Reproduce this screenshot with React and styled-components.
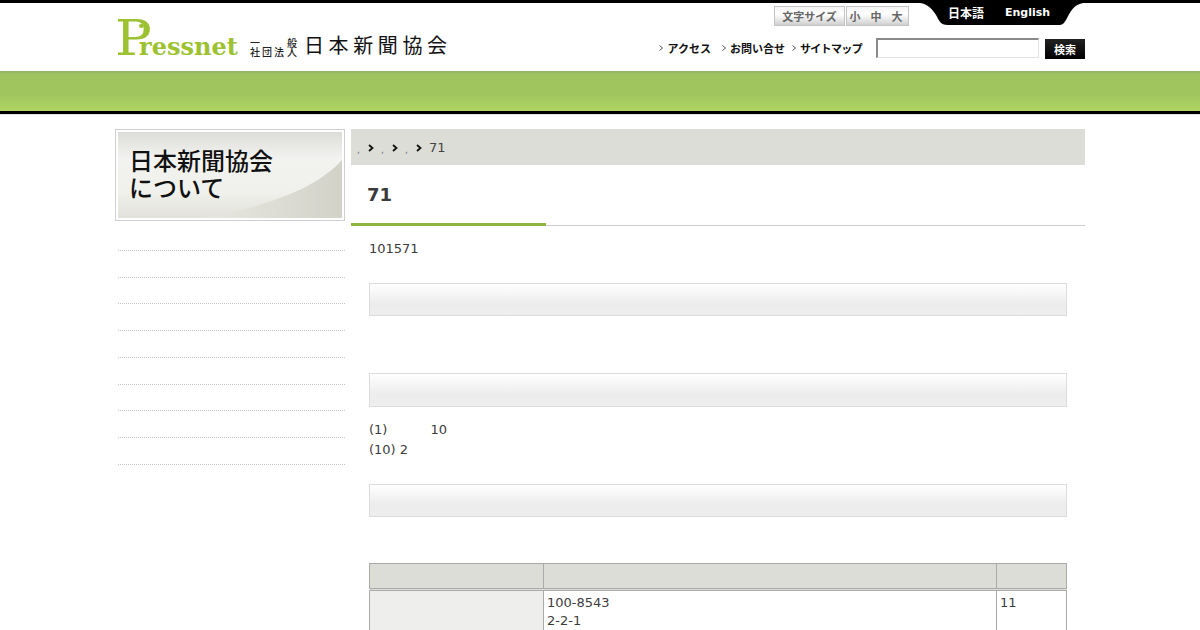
import React from "react";
import styled, { createGlobalStyle } from "styled-components";

const GlobalStyle = createGlobalStyle`
  html, body {
    margin: 0;
    padding: 0;
    background: #fff;
    color: #3c3c3c;
    font-family: "DejaVu Sans", sans-serif;
    font-size: 13px;
    line-height: 20px;
  }
`;

const CJK = `"Noto Sans CJK JP", "DejaVu Sans", sans-serif`;

const Header = styled.header`
  border-top: 3px solid #000;
  height: 68px;
  background: #fff;
`;

const Inner = styled.div`
  width: 970px;
  margin: 0 auto;
  position: relative;
`;

const HeaderInner = styled(Inner)`
  height: 68px;
  display: flex;
  justify-content: space-between;
`;

const LogoArea = styled.div`
  display: flex;
  align-items: flex-end;
  padding: 0 0 14px 0;
`;

const Logo = styled.div`
  position: relative;
  display: flex;
  align-items: flex-end;
  width: 135px;
  height: 38px;
  color: #9cc232;
`;

const LogoP = styled.span`
  position: relative;
  font-family: "DejaVu Serif", serif;
  font-size: 48px;
  line-height: 38px;
  width: 24px;
  transform: scaleX(1.14);
  transform-origin: left bottom;
  &::after {
    content: "";
    position: absolute;
    left: 21px;
    top: 5px;
    width: 4px;
    height: 4px;
    border-radius: 50%;
    background: #9cc232;
  }
`;

const LogoRest = styled.span`
  font-family: "DejaVu Serif", serif;
  font-weight: 700;
  font-size: 24px;
  line-height: 20px;
`;

const Corp = styled.div`
  display: grid;
  grid-template-columns: 37px 12px;
  width: 54px;
  font-family: ${CJK};
  font-size: 10px;
  font-weight: 500;
  line-height: 9px;
  color: #222;
  margin-bottom: 1px;
`;

const CorpCell = styled.span`
  letter-spacing: ${(p) => p.$spacing || 0}px;
  white-space: nowrap;
`;

const OrgName = styled.div`
  font-family: ${CJK};
  font-size: 20px;
  line-height: 20px;
  letter-spacing: 4.6px;
  color: #111;
  margin-bottom: 2px;
`;

const HeaderRight = styled.div`
  display: flex;
  flex-direction: column;
  align-items: flex-end;
`;

const TopRow = styled.div`
  display: flex;
  height: 35px;
`;

const SizeBox = styled.div`
  display: flex;
  gap: 1px;
  height: 20px;
  margin: 3px 11px 0 0;
  font-family: ${CJK};
  font-size: 11px;
  font-weight: 700;
  line-height: 19px;
  color: #666;
`;

const SizeCell = styled.div`
  display: flex;
  justify-content: center;
  gap: 10px;
  width: ${(p) => p.$width}px;
  padding-right: ${(p) => p.$inset || 0}px;
  background: linear-gradient(#f4f4f4, #fff 40%, #cfcfcf);
  border: 1px solid #c4c4c4;
  box-sizing: border-box;
`;

const LangTab = styled.div`
  display: flex;
  gap: 21px;
  width: 165px;
  height: 22px;
  box-sizing: border-box;
  padding-left: 28px;
  background: #000;
  color: #fff;
  font-family: ${CJK};
  font-size: 12px;
  font-weight: 700;
  line-height: 20px;
  clip-path: path("M0 0 H163 C153 2 151 8 146 17 C144 20 143 22 138 22 H28 C20 22 19 17 16 12 C12 6 8 1 0 0 Z");
`;

const LangEn = styled.span`
  font-family: "DejaVu Sans", sans-serif;
  font-size: 11px;
`;

const NavRow = styled.div`
  display: flex;
  align-items: flex-start;
`;

const NavList = styled.nav`
  display: flex;
  margin-right: 14px;
`;

const NavLink = styled.a`
  display: flex;
  align-items: center;
  gap: 4px;
  margin-left: ${(p) => p.$gap}px;
  font-family: ${CJK};
  font-size: 11px;
  font-weight: 700;
  line-height: 20px;
  letter-spacing: ${(p) => p.$spacing || 0}px;
  color: #111;
`;

const NavArrow = styled.svg`
  width: 4px;
  height: 6px;
`;

const SearchInput = styled.input`
  width: 163px;
  height: 20px;
  box-sizing: border-box;
  padding: 0;
  border: 1px solid #e4e4e4;
  border-top: 2px solid #8a8a8a;
  border-left: 2px solid #8a8a8a;
  background: #fff;
`;

const SearchButton = styled.button`
  width: 40px;
  height: 20px;
  margin: 1px 0 0 6px;
  padding: 0;
  border: 0;
  background: linear-gradient(#222, #000);
  color: #fff;
  font-family: ${CJK};
  font-size: 11px;
  font-weight: 700;
  line-height: 20px;
`;

const Band = styled.div`
  height: 40px;
  background: linear-gradient(#8fae6c 0, #9fc45f 3px, #a1c65f 60%, #b0d460 100%);
  border-bottom: 3px solid #000;
  box-shadow: 0 1px 0 #e2e8e4;
`;

const Columns = styled(Inner)`
  display: flex;
  justify-content: space-between;
  padding-top: 15px;
`;

const Side = styled.aside`
  width: 230px;
`;

const SideTitle = styled.div`
  position: relative;
  height: 92px;
  box-sizing: border-box;
  border: 1px solid #cfcfcf;
  padding: 2px;
  background: #fff;
`;

const SideTitleInner = styled.div`
  position: relative;
  height: 100%;
  overflow: hidden;
  background: linear-gradient(#dcdcd8, #f2f2f0 30%, #f0f0ec 70%, #e2e2da);
`;

const Swoosh = styled.svg`
  position: absolute;
  left: 0;
  top: 0;
  width: 100%;
  height: 100%;
`;

const SideText = styled.h2`
  position: relative;
  margin: 0;
  padding: 14px 0 0 11px;
  font-family: ${CJK};
  font-size: 24px;
  font-weight: 500;
  line-height: 27px;
  color: #111;
`;

const SideMenu = styled.ul`
  list-style: none;
  margin: 0 0 0 3px;
  padding: 3px 0 0;
`;

const SideItem = styled.li`
  height: 26.75px;
  box-sizing: border-box;
  border-bottom: 1px dotted #c4c4c4;
`;

const Main = styled.main`
  width: 734px;
`;

const Crumbs = styled.div`
  display: flex;
  align-items: center;
  height: 36px;
  box-sizing: border-box;
  padding: 2px 0 0 6px;
  background: #dcddd6;
  color: #444;
`;

const CrumbLink = styled.span`
  width: 11px;
  font-size: 9px;
  color: #667;
  line-height: 20px;
  padding-top: 3px;
`;

const CrumbArrow = styled.svg`
  width: 6px;
  height: 8px;
  margin-right: 7px;
`;

const TitleRow = styled.div`
  position: relative;
  height: 61px;
  border-bottom: 1px solid #ccc;
  box-sizing: border-box;
  padding: 17px 0 0 16px;
  &::after {
    content: "";
    position: absolute;
    left: 0;
    bottom: -1px;
    width: 195px;
    height: 3px;
    background: #8fb63c;
  }
`;

const Title = styled.h1`
  margin: 0;
  font-size: 18px;
  line-height: 26px;
  font-weight: 700;
  color: #3a3a3a;
`;

const Body = styled.div`
  padding: 13px 18px 0;
`;

const Para = styled.p`
  margin: 0;
`;

const SectionBar = styled.h3`
  height: ${(p) => p.$height}px;
  margin: ${(p) => p.$top}px 0 ${(p) => p.$bottom}px;
  box-sizing: border-box;
  border: 1px solid #dcdcdc;
  background: linear-gradient(#fff, #ececec 65%, #eee);
`;

const Tab = styled.span`
  display: inline-block;
  width: ${(p) => p.$width}px;
`;

const Table = styled.table`
  width: 697px;
  table-layout: fixed;
  border-collapse: collapse;
`;

const HeadCell = styled.th`
  width: ${(p) => p.$width}px;
  height: 24px;
  padding: 0;
  border: 1px solid #aaa;
  border-bottom: 3px double #aaa;
  background: #dcddd6;
`;

const Cell = styled.td`
  height: 80px;
  padding: 3px;
  border: 1px solid #aaa;
  vertical-align: top;
  line-height: 18px;
  background: ${(p) => (p.$shaded ? "#eeeeec" : "#fff")};
`;

function Arrow() {
  return (
    <NavArrow viewBox="0 0 4 6">
      <path d="M0.5 0.5 L3.5 3 L0.5 5.5" fill="none" stroke="#555" strokeWidth="1" />
    </NavArrow>
  );
}

function Crumb() {
  return (
    <>
      <CrumbLink>,</CrumbLink>
      <CrumbArrow viewBox="0 0 6 8">
        <path d="M1 1 L4.5 4 L1 7" fill="none" stroke="#111" strokeWidth="1.8" />
      </CrumbArrow>
    </>
  );
}

export default function App() {
  return (
    <>
      <GlobalStyle />
      <Header>
        <HeaderInner>
          <LogoArea>
            <Logo>
              <LogoP>P</LogoP>
              <LogoRest>ressnet</LogoRest>
            </Logo>
            <Corp>
              <CorpCell>一</CorpCell>
              <CorpCell>般</CorpCell>
              <CorpCell $spacing={2}>社団法</CorpCell>
              <CorpCell>人</CorpCell>
            </Corp>
            <OrgName>日本新聞協会</OrgName>
          </LogoArea>
          <HeaderRight>
            <TopRow>
              <SizeBox>
                <SizeCell $width={71}>文字サイズ</SizeCell>
                <SizeCell $width={63} $inset={3}>
                  <span>小</span>
                  <span>中</span>
                  <span>大</span>
                </SizeCell>
              </SizeBox>
              <LangTab>
                <span>日本語</span>
                <LangEn>English</LangEn>
              </LangTab>
            </TopRow>
            <NavRow>
              <NavList>
                <NavLink $gap={0}>
                  <Arrow />
                  アクセス
                </NavLink>
                <NavLink $gap={11}>
                  <Arrow />
                  お問い合せ
                </NavLink>
                <NavLink $gap={7} $spacing={-0.65}>
                  <Arrow />
                  サイトマップ
                </NavLink>
              </NavList>
              <SearchInput />
              <SearchButton>検索</SearchButton>
            </NavRow>
          </HeaderRight>
        </HeaderInner>
      </Header>
      <Band />
      <Columns>
        <Side>
          <SideTitle>
            <SideTitleInner>
              <Swoosh viewBox="0 0 224 86" preserveAspectRatio="none">
                <defs>
                  <linearGradient id="swoosh" x1="0" x2="1" y1="0" y2="0">
                    <stop offset="0" stopColor="#e8e8e0" />
                    <stop offset="1" stopColor="#d2d2c9" />
                  </linearGradient>
                </defs>
                <path d="M85 86 C140 76 195 60 224 28 V86 Z" fill="url(#swoosh)" />
              </Swoosh>
              <SideText>
                日本新聞協会
                <br />
                について
              </SideText>
            </SideTitleInner>
          </SideTitle>
          <SideMenu>
            {Array.from({ length: 9 }).map((_, i) => (
              <SideItem key={i} />
            ))}
          </SideMenu>
        </Side>
        <Main>
          <Crumbs>
            <Crumb />
            <Crumb />
            <Crumb />
            71
          </Crumbs>
          <TitleRow>
            <Title>71</Title>
          </TitleRow>
          <Body>
            <Para>101571</Para>
            <SectionBar $height={33} $top={24} $bottom={57} />
            <SectionBar $height={34} $top={0} $bottom={13} />
            <Para>
              (1)<Tab $width={43} />10
            </Para>
            <Para>(10) 2</Para>
            <SectionBar $height={33} $top={24} $bottom={46} />
            <Table>
              <thead>
                <tr>
                  <HeadCell $width={173} />
                  <HeadCell $width={452} />
                  <HeadCell $width={69} />
                </tr>
              </thead>
              <tbody>
                <tr>
                  <Cell $shaded />
                  <Cell>
                    100-8543
                    <br />
                    2-2-1
                  </Cell>
                  <Cell>11</Cell>
                </tr>
              </tbody>
            </Table>
          </Body>
        </Main>
      </Columns>
    </>
  );
}
